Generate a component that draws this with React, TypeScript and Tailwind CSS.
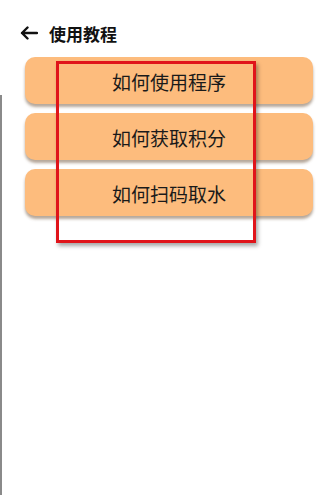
import { useState } from "react";

const items = ["如何使用程序", "如何获取积分", "如何扫码取水"];

const App = () => {
  const [active, setActive] = useState<number | null>(null);

  return (
    <div
      className="relative w-[331px] h-[503px] bg-white overflow-hidden"
      style={{ fontFamily: '"Noto Sans CJK SC", "Noto Sans", sans-serif' }}
    >
      {/* left edge line of the underlying page */}
      <div className="absolute left-0 top-[95px] h-[400px] w-[2px] bg-[#8a8a8a]" />

      <div className="flex items-center gap-[11px] pl-[20px] pt-[22px] h-[44px]">
        <svg width="18" height="14" viewBox="0 0 18 14" fill="none">
          <path d="M17 7H2M7.5 1.5L2 7l5.5 5.5" stroke="#111" strokeWidth="2.4" strokeLinecap="round" strokeLinejoin="round" />
        </svg>
        <span className="text-[17px] font-bold text-[#111] leading-none">使用教程</span>
      </div>

      <div className="flex flex-col gap-[9px] pl-[25px] pr-[18px] pt-[13px]">
        {items.map((t, i) => (
          <button
            key={t}
            onClick={() => setActive(i)}
            className={`h-[47px] w-full rounded-[10px] bg-[#fdbc7d] shadow-[0_3px_3px_rgba(90,60,30,0.45)] text-[19px] text-[#1a1a1a] flex items-center justify-center pt-[3px] ${active === i ? "brightness-95" : ""}`}
          >
            {t}
          </button>
        ))}
      </div>

      {/* annotation box */}
      <div className="absolute left-[56px] top-[61px] w-[200px] h-[182px] border-[3px] border-[#e0141a] shadow-[2px_3px_4px_rgba(0,0,0,0.35)] pointer-events-none" />
    </div>
  );
};

export default App;
